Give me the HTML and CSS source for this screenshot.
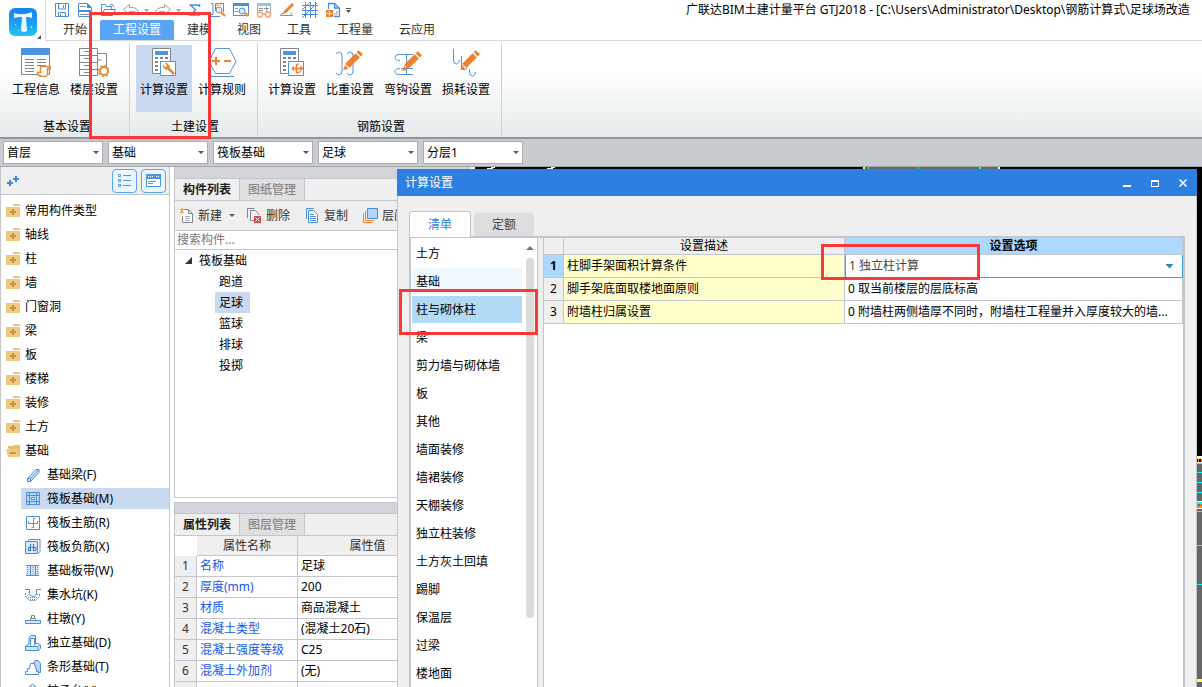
FILE: index.html
```html
<!DOCTYPE html>
<html lang="zh-CN">
<head>
<meta charset="utf-8">
<title>广联达BIM土建计量平台 GTJ2018</title>
<link rel="stylesheet" href="styles.css">
</head>
<body>
<svg class="defs" aria-hidden="true">
  <symbol id="folder" viewBox="0 0 14 13"><path d="M7 1V0h6l1 1v1H7z" fill="#efc981"/><path d="M0 3h14v10H0z" fill="#efc981"/><path d="M4 8h6M7 5v6" stroke="#c79635" stroke-width="2"/></symbol>
  <symbol id="calc" viewBox="0 0 30 30"><path d="M5.500 1.500h18v25h-18z" fill="#fff" stroke="#7f878c"/><path d="M8 4h13v4H8z" fill="#4f93e0"/><path d="M8 10h3v2H8zm5 0h3v2h-3zm5 0h3v2h-3zM8 14h3v2H8zm5 0h3v2h-3zM8 18h3v2H8zM8 22h3v2H8z" fill="#7f878c"/><path d="M13.500 14.500h15v14h-15z" fill="#fff" stroke="#4f93e0"/></symbol>
  <symbol id="pencil" viewBox="0 0 24 24"><path d="m5 16 10-10 4 4L9 20zM16 5l2-2 4 4-2 2zM3 22l2-5 3 4z" fill="#ee7f2d"/></symbol>
</svg>

<header class="head">
  <button class="logo" aria-label="应用菜单">
    <svg width="30" height="30" viewBox="0 0 30 30"><defs><linearGradient id="lg" x2="0" y2="1"><stop stop-color="#1683ee"/><stop offset=".5" stop-color="#1c9cf3"/><stop offset="1" stop-color="#20c4f8"/></linearGradient></defs><rect x="1" y="1" width="28" height="28" rx="6" fill="url(#lg)"/><path d="M6 6q9 3 18-1v6q-3-1-6-1l1 14q-3 2-6 0l1-14q-4 0-8 1z" fill="#e9f6ff"/><path d="M7 17h1v1H7zm16 2h1v2h-1zm-13 4h1v1h-1z" fill="#bfe4ff"/></svg>
    <svg class="corner" width="4" height="4" viewBox="0 0 4 4"><path d="M4 0v4H0z" fill="#555"/></svg>
  </button>
  <div class="head-main">
    <div class="quick">
      <button aria-label="保存"><svg viewBox="0 0 16 16"><path d="M1.500 1.500h13v13h-13zM4.500 2v5h7V2M4.500 14.500v-4h7v4M6.500 12v2" fill="none" stroke="#4a8ddb"/><path d="M9 3h1v3H9z" fill="#4a8ddb"/></svg></button>
      <button aria-label="新建"><svg viewBox="0 0 16 16"><path d="M1.500 1.500h9l4 4v9h-13z" fill="#fff" stroke="#4a8ddb"/><path d="M10 1v5h5zM1 8h14v2H1z" fill="#4a8ddb"/><path d="M3 4.500h6M3 12.500h9" stroke="#8c9397"/></svg></button>
      <button aria-label="打开"><svg viewBox="0 0 16 16"><path d="M1.500 13.500v-11h4l1 2h5v3M1.500 13.500l3-6h11l-3 6zM10 3q3-2 4 2" fill="none" stroke="#4a8ddb"/></svg></button>
      <button aria-label="撤销"><svg viewBox="0 0 16 16"><path d="m.5 7.500 6-5v3q9-1 9 7-3-4-9-3v3z" fill="none" stroke="#9aa0a5"/></svg></button>
      <button class="drop" aria-label="撤销列表"><svg viewBox="0 0 5 3"><path d="M0 0h5L2.500 3z" fill="#9aa0a5"/></svg></button>
      <button aria-label="重做"><svg viewBox="0 0 16 16"><path d="m15.500 7.500-6-5v3q-9-1-9 7 3-4 9-3v3z" fill="none" stroke="#9aa0a5"/></svg></button>
      <button class="drop" aria-label="重做列表"><svg viewBox="0 0 5 3"><path d="M0 0h5L2.500 3z" fill="#9aa0a5"/></svg></button>
      <button aria-label="汇总计算"><svg viewBox="0 0 16 16"><path d="M12.500 5V3h-9l5 5-5 5h9v-2" fill="none" stroke="#4a8ddb" stroke-width="1.500"/></svg></button>
      <button aria-label="查看工程量"><svg viewBox="0 0 16 16"><path d="M1 1.500h2v11H1M5.500 9V1.500h8V10M1 14.500h9" fill="none" stroke="#4a8ddb"/><path d="M6 3h6M6 6h6M7.500 1v7M10.500 1v7" stroke="#ee7f2d" stroke-dasharray="1 1"/><circle cx="9" cy="8" r="3" fill="#dbe9fa" stroke="#8c9397"/><path d="m11 10 4 4" stroke="#ee7f2d" stroke-width="2"/></svg></button>
      <button aria-label="查找"><svg viewBox="0 0 16 16"><path d="M.5 1.500h15v12H.5z" fill="#fff" stroke="#4a8ddb"/><path d="M0 1h16v3H0z" fill="#4a8ddb"/><path d="M2 6.500h3M2 9.500h3" stroke="#8c9397"/><circle cx="9" cy="9" r="3" fill="#dbe9fa" stroke="#4a8ddb"/><path d="m11 12 2-2 3 3-2 2z" fill="#f0a020"/></svg></button>
      <button aria-label="查看属性"><svg viewBox="0 0 16 16"><path d="M1.500 11V1.500h13V11" fill="#fff" stroke="#a3b2c2"/><path d="M1 1h14v3H1z" fill="#9dbde6"/><path d="M3 6.500h4M3 8.500h4M8 6.500h5M10.500 5v5" stroke="#8c9397"/><circle cx="4" cy="12.500" r="2.500" fill="#fff" stroke="#f0a77a" stroke-width="1.500"/><circle cx="12" cy="12.500" r="2.500" fill="#fff" stroke="#f0a77a" stroke-width="1.500"/><path d="M6.500 12h3" stroke="#f0a77a" stroke-width="1.500"/></svg></button>
      <button aria-label="编辑"><svg viewBox="0 0 16 16"><path d="m5 9 8-8 2 2-8 8-3 1z" fill="#ee7f2d"/><path d="M5 11.500H2.500l-1 2h12l-2-3" fill="none" stroke="#8c9397"/></svg></button>
      <button aria-label="轴网"><svg viewBox="0 0 16 16"><path d="M0 3.500h16M0 8.500h16M0 12.500h16M3.500 0v16M8.500 0v16M13.500 0v16M0 16 15 1M0 8l8-8" fill="none" stroke="#4a8ddb"/></svg></button>
      <button aria-label="导入"><svg viewBox="0 0 16 16"><path d="M3.500 7V1.500h6l5 5v8H9M9.500 1v5h5" fill="none" stroke="#4a8ddb" stroke-width="1.300"/><path d="M1 8h7v7H1z" fill="#ee7f2d"/><path d="M2 11.500h5M4.500 9v5" stroke="#fff"/><path d="M12 9v3H9" fill="none" stroke="#8c9397"/></svg></button>
      <button class="drop" aria-label="更多"><svg viewBox="0 0 5 5"><path d="M0 .5h5" stroke="#555"/><path d="M0 2h5L2.500 5z" fill="#555"/></svg></button>
      <div class="app-title">广联达BIM土建计量平台 GTJ2018 - [C:\Users\Administrator\Desktop\钢筋计算式\足球场改造</div>
    </div>
    <nav class="menu">
      <button>开始</button><button class="on">工程设置</button><button>建模</button><button>视图</button><button>工具</button><button>工程量</button><button>云应用</button>
    </nav>
  </div>
</header>

<div class="ribbon">
  <section class="group">
    <div class="tools">
      <button class="tool"><svg viewBox="0 0 30 30"><path d="M.5 1.500h28v26H.5z" fill="#fff" stroke="#7f878c"/><path d="M0 1h29v7H0z" fill="#4f93e0"/><path d="M4 12.500h9M4 15.500h9M4 18.500h9M4 21.500h9M4 24.500h9M16 12.500h9M16 15.500h9M16 18.500h9" stroke="#7f878c"/><path d="M20.500 28.500q-3 1-4-2v-1h3v-6h9v2h-2v6q-1 2-4 2h-4M28 19q2 0 1 3h-2" fill="#fff" stroke="#e98b35" stroke-width="1.500"/></svg>工程信息</button>
      <button class="tool"><svg viewBox="0 0 30 30"><path d="M.5 1.500h18v27H.5zM.5 8.500h18M.5 15.500h18M.5 22.500h18M18.500 6.500h9V20" fill="none" stroke="#7f878c"/><path d="M5 4.500h5M5 11.500h5M5 18.500h5M5 25.500h5M18.500 13h4" stroke="#7f878c"/><circle cx="25" cy="24" r="4" fill="#fff" stroke="#e98b35" stroke-width="2"/><circle cx="25" cy="24" r="5.500" fill="none" stroke="#e98b35" stroke-width="1.500" stroke-dasharray="2 2.300"/></svg>楼层设置</button>
    </div>
    <h2>基本设置</h2>
  </section>
  <section class="group">
    <div class="tools">
      <button class="tool on"><svg viewBox="0 0 30 30"><use href="#calc" width="30" height="30" x="-2"/><path d="m18 20 7 7" stroke="#ee7f2d" stroke-width="2.500"/><path d="M14 17v3l3 3 3-1 1-3-3-3h-2l2 3-2 1z" fill="#e98b35"/></svg>计算设置</button>
      <button class="tool"><svg viewBox="0 0 30 30"><path d="M8.500 1.500h14l6.500 13-6.500 12h-14L2 14.500zM3 29.500h24" fill="none" stroke="#4f93e0"/><path d="M5 14h8M9 10v8M17 14h7" stroke="#ee7f2d" stroke-width="2"/></svg>计算规则</button>
    </div>
    <h2>土建设置</h2>
  </section>
  <section class="group">
    <div class="tools">
      <button class="tool"><svg viewBox="0 0 30 30"><use href="#calc" width="30" height="30" x="-2"/><path d="M15 21.500h10M19.500 26v-7q0-2 2-2M17 19.500q-3 2 0 4M19.500 26q3 0 4-2M23.500 19.500l2 2-2 2" fill="none" stroke="#ee7f2d" stroke-width="1.500"/></svg>计算设置</button>
      <button class="tool"><svg viewBox="0 0 30 30"><path d="M1 7q1-2 3-2 3 0 3 4v15q0 4-3 4-2 0-3-2M12 7q1-2 3-2 3 0 3 4v15q0 4-3 4-2 0-3-2" fill="none" stroke="#4f93e0"/><use href="#pencil" x="5" y="0" width="25" height="25"/></svg>比重设置</button>
      <button class="tool"><svg viewBox="0 0 30 30"><path d="M20 7.500H6q-4 0-4 3 0 3 5 3M13.500 7v20M7 21.500q-5 0-5 3 0 3 5 3h13M8 21.500h12" fill="none" stroke="#4f93e0"/><use href="#pencil" x="6" y="1" width="25" height="25"/></svg>弯钩设置</button>
      <button class="tool"><svg viewBox="0 0 30 30"><path d="M2.500 2v11q0 4 3 4 3-1 3-4M10.500 9v10q0 4 3 4l3-2M18.500 22v3q0 4 3 4 3-1 3-4" fill="none" stroke="#4f93e0"/><use href="#pencil" x="6" y="0" width="25" height="25"/></svg>损耗设置</button>
    </div>
    <h2>钢筋设置</h2>
  </section>
  <div class="mark mark-ribbon"></div>
</div>

<div class="filters">
  <label class="pick"><select aria-label="楼层"><option>首层</option></select></label>
  <label class="pick"><select aria-label="构件大类"><option>基础</option></select></label>
  <label class="pick"><select aria-label="构件类型"><option>筏板基础</option></select></label>
  <label class="pick"><select aria-label="构件"><option>足球</option></select></label>
  <label class="pick"><select aria-label="分层"><option>分层1</option></select></label>
</div>

<main class="work">
  <aside class="nav">
    <div class="nav-bar">
      <svg width="12" height="12" viewBox="0 0 12 12"><path d="M0 8h6M3 5v6M6 4h6M9 1v6" stroke="#3f88dc" stroke-width="2"/></svg>
      <button aria-label="列表视图"><svg width="15" height="15" viewBox="0 0 15 15"><path d="M1.500 1.500h2v2h-2zm0 5h2v2h-2zm0 5h2v2h-2zM6 2.500h8M6 7.500h8M6 12.500h8" fill="none" stroke="#4a98ee"/></svg></button>
      <button aria-label="窗口视图"><svg width="15" height="15" viewBox="0 0 15 15"><path d="M.5 1.500h14v12H.5z" fill="#fff" stroke="#4a98ee"/><path d="M0 1h15v5H0z" fill="#4a98ee"/><path d="M2 3.500h5M10 3.500h3" stroke="#fff" stroke-dasharray="1 1"/><path d="M2 8.500h8M2 10.500h5" stroke="#4a98ee"/></svg></button>
    </div>
    <ul class="kinds">
      <li><svg><use href="#folder"/></svg>常用构件类型</li>
      <li><svg><use href="#folder"/></svg>轴线</li>
      <li><svg><use href="#folder"/></svg>柱</li>
      <li><svg><use href="#folder"/></svg>墙</li>
      <li><svg><use href="#folder"/></svg>门窗洞</li>
      <li><svg><use href="#folder"/></svg>梁</li>
      <li><svg><use href="#folder"/></svg>板</li>
      <li><svg><use href="#folder"/></svg>楼梯</li>
      <li><svg><use href="#folder"/></svg>装修</li>
      <li><svg><use href="#folder"/></svg>土方</li>
      <li><svg viewBox="0 0 14 13"><path d="M2 4V2h5l1-1h5l1 1v10z" fill="#e6bb6c"/><path d="M0 5h12l2 8H2z" fill="#efc981"/><path d="M4 9h6" stroke="#b98829" stroke-width="1.500"/></svg>基础</li>
      <li class="sub"><svg viewBox="0 0 16 16"><path d="M2.500 11.500 11 2.500h3v3l-8.500 9h-3zM2.500 11.500h3v3M5.500 11.500l8-8.500" fill="#d7e6f8" stroke="#4a8ddb"/></svg>基础梁(F)</li>
      <li class="sub on"><svg viewBox="0 0 16 16"><path d="M1.500 1.500h13v12h-13zM4.500 1.500v12M11.500 1.500v12M1.500 4.500h13M1.500 10.500h13" fill="#bcd6f5" stroke="#4a8ddb"/><path d="M6.500 6.500h3v2h-3z" fill="#fff" stroke="#4a8ddb"/></svg>筏板基础(M)</li>
      <li class="sub"><svg viewBox="0 0 16 16"><path d="M1.500 1.500h13v13h-13z" fill="#fff" stroke="#4a8ddb"/><path d="M3.500 6v2.500h9V6M10.500 3.500h-2v9h-2" fill="none" stroke="#7f878c"/></svg>筏板主筋(R)</li>
      <li class="sub"><svg viewBox="0 0 16 16"><path d="M3 2.500l1-2h11v12l-2 2" fill="#fff" stroke="#4a8ddb"/><path d="M.5 2.500h12v12H.5z" fill="#d7e6f8" stroke="#4a8ddb"/><path d="M3.500 11V8.500h3M5.500 5v7M8.500 5v7M7 8.500h4V11M3 11.500h3M8 11.500h3" fill="none" stroke="#2f78cc"/></svg>筏板负筋(X)</li>
      <li class="sub"><svg viewBox="0 0 16 16"><path d="M1 2h13v11H1z" fill="#d7e6f8"/><path d="M1 2.500h13M1 12.500h13M5.500 2v11M10.500 2v11" stroke="#4a8ddb"/><path d="M2.500 4v8M8 4v8M12.500 4v8" stroke="#4a8ddb" stroke-dasharray="1 1"/></svg>基础板带(W)</li>
      <li class="sub"><svg viewBox="0 0 16 16"><path d="M0 2.500h4.500v4q0 3 3.500 3t3.500-3v-4H16" fill="none" stroke="#4a8ddb"/><path d="M.5 6v3l4 4.500h6l4-4V6" fill="none" stroke="#4a8ddb" stroke-dasharray="2 1"/><path d="M3 10.500h10M5 12.500h6M2 8.500h2M12 7.500h2" stroke="#7f878c" stroke-dasharray="1 1"/></svg>集水坑(K)</li>
      <li class="sub"><svg viewBox="0 0 16 16"><path d="M.5 9.500h15v3H.5z" fill="#d7e6f8" stroke="#4a8ddb"/><path d="M5.500 9.500v-2h5v2M6.500 7.500v-3h3v3" fill="none" stroke="#7f878c"/></svg>柱墩(Y)</li>
      <li class="sub"><svg viewBox="0 0 16 16"><path d="M.5 11.500 4 8.500V3l2-2.500h4.500v8h3l2 2v3l-2 2H.5z" fill="#d7e6f8" stroke="#4a8ddb"/><path d="M5.500 10.500v-7h4v7M.5 11.500h12l3-2M13 12v3" fill="#fff" stroke="#4a8ddb"/></svg>独立基础(D)</li>
      <li class="sub"><svg viewBox="0 0 16 16"><path d="M8 4.500l2-3h3l2.500 3v9h-4z" fill="#bcd6f5" stroke="#4a8ddb"/><path d="M.5 15.500v-3h2v-3h2l1-5h4l1 5h1v3h2v3z" fill="#fff" stroke="#4a8ddb"/></svg>条形基础(T)</li>
      <li class="sub"><svg viewBox="0 0 16 16"><path d="m7.500 1 5 4v8h-10V5z" fill="#d7e6f8" stroke="#4a8ddb"/></svg>桩承台(V)</li>
    </ul>
  </aside>

  <div class="mid">
    <section class="pane parts">
      <div class="strip"></div>
      <div class="tabs"><button class="on">构件列表</button><button>图纸管理</button></div>
      <div class="bar">
        <button><svg viewBox="0 0 15 15"><path d="M3.500 4V1.500h6l4 4v9h-10V8M9.500 1.500v4h4" fill="#fff" stroke="#7f878c"/><path d="M6 8.500h5M6 10.500h5M6 12.500h5" stroke="#aab"/><path d="m1 1 4 4M5 1 1 5M3 0v6" stroke="#ee9a2d"/></svg>新建<i class="caret"></i></button>
        <button><svg viewBox="0 0 15 15"><path d="M.5 10V.5h7M3.500 12.500v-10h5l3 3V7M3.500 12.500H7" fill="none" stroke="#7f878c"/><path d="M7 8h7v7H7z" fill="#d5454b"/><path d="m8.500 9.500 4 4m0-4-4 4" stroke="#fff"/></svg>删除</button>
        <button><svg viewBox="0 0 15 15"><path d="M1.500 11V.5h7" fill="none" stroke="#4a8ddb"/><path d="M3.500 2.500h5l4 4v8h-9z" fill="#fff" stroke="#4a8ddb"/><path d="M5 6.500h4M5 8.500h6M5 10.500h6M5 12.500h6" stroke="#4a8ddb"/></svg>复制</button>
        <button><svg viewBox="0 0 15 15"><path d="M.5 5v9.500h9M2.500 3v9.500h9" fill="none" stroke="#ee7f2d"/><path d="M4.500.5h10v10h-10z" fill="#b4d4fb" stroke="#4a8ddb"/></svg>层间复制</button>
      </div>
      <input class="search" type="text" placeholder="搜索构件..." aria-label="搜索构件">
      <ul class="tree">
        <li class="root"><svg width="7" height="7" viewBox="0 0 7 7"><path d="M7 0v7H0z" fill="#333"/></svg>筏板基础</li>
        <li><span>跑道</span></li>
        <li><span class="on">足球</span></li>
        <li><span>篮球</span></li>
        <li><span>排球</span></li>
        <li><span>投掷</span></li>
      </ul>
    </section>
    <section class="pane props">
      <div class="strip"></div>
      <div class="tabs"><button class="on">属性列表</button><button>图层管理</button></div>
      <table class="attrs">
        <colgroup><col class="c-no"><col class="c-name"><col class="c-val"><col></colgroup>
        <thead><tr><td></td><th>属性名称</th><th>属性值</th><th></th></tr></thead>
        <tbody>
          <tr><th>1</th><td>名称</td><td>足球</td><td></td></tr>
          <tr><th>2</th><td>厚度(mm)</td><td>200</td><td></td></tr>
          <tr><th>3</th><td>材质</td><td>商品混凝土</td><td></td></tr>
          <tr><th>4</th><td>混凝土类型</td><td>(混凝土20石)</td><td></td></tr>
          <tr><th>5</th><td>混凝土强度等级</td><td>C25</td><td></td></tr>
          <tr><th>6</th><td>混凝土外加剂</td><td>(无)</td><td></td></tr>
          <tr><th></th><td></td><td></td><td></td></tr>
        </tbody>
      </table>
    </section>
  </div>

  <div class="canvas">
    <svg class="plan-top" width="600" height="2" viewBox="0 0 600 2"><path d="M0 0h4v2H0zM16 1h6v1h-6zM20 0h4v1h-4zM76 1h6v1h-6zM80 0h4v1h-4zM527 0h2v2h-2z" fill="#fff"/><path d="M392 0h135v2H392z" fill="#666"/><path d="M392 0h2v2h-2z" fill="#ff4"/><path d="M397 0h1v2h-1zM447 0h1v2h-1zM508 0h2v2h-2z" fill="#0ff"/></svg>
    <svg class="plan-side" width="5" height="520" viewBox="0 0 5 520"><path d="M0 296h5v224H0z" fill="#666"/><path d="M0 289h5v1H0zM0 295h5v1H0zM0 334h5v1H0zM0 341h5v1H0z" fill="#fff"/><path d="M0 290h5v2H0zM0 512h5v3H0z" fill="#ff4"/><path d="M1 292h1v3H1zM4 292h1v3H4zM0 337h1v4H0zM0 339h5v2H0zM3 337h1v4H3z" fill="#f80"/><path d="M0 296h5v1H0zM0 305h5v1H0zM0 315h5v1H0zM0 325h5v1H0zM0 335h5v2H0zM0 344h5v1H0zM0 378h5v1H0zM0 417h5v1H0z" fill="#0ff"/></svg>
  </div>

  <div class="dialog" role="dialog" aria-labelledby="dlg">
    <div class="dlg-head">
      <h1 id="dlg">计算设置</h1>
      <button aria-label="最小化"><svg viewBox="0 0 8 8"><path d="M0 6h8v2H0z" fill="#fff"/></svg></button>
      <button aria-label="最大化"><svg viewBox="0 0 8 8"><path d="M0 1h8v7H0zm1 2v4h6V3z" fill="#fff" fill-rule="evenodd"/></svg></button>
      <button aria-label="关闭"><svg viewBox="0 0 8 8"><path d="m.5.5 7 7m0-7-7 7" stroke="#fff" stroke-width="1.500"/></svg></button>
    </div>
    <div class="dlg-body">
      <div class="dlg-tabs"><button class="on">清单</button><button>定额</button></div>
      <div class="dlg-main">
        <div class="list-box">
          <ul class="list">
            <li>土方</li><li class="hover">基础</li><li class="on">柱与砌体柱</li><li>梁</li><li>剪力墙与砌体墙</li><li>板</li><li>其他</li><li>墙面装修</li><li>墙裙装修</li><li>天棚装修</li><li>独立柱装修</li><li>土方灰土回填</li><li>踢脚</li><li>保温层</li><li>过梁</li><li>楼地面</li>
          </ul>
          <div class="scroll"><svg width="8" height="4" viewBox="0 0 8 4"><path d="M0 4h8L4 0z" fill="#777"/></svg><span class="thumb"></span></div>
        </div>
        <div class="grid-box">
          <table class="rules">
            <colgroup><col class="r-no"><col class="r-desc"><col></colgroup>
            <thead><tr><td></td><th>设置描述</th><th class="cur">设置选项</th></tr></thead>
            <tbody>
              <tr><th class="cur">1</th><td>柱脚手架面积计算条件</td><td class="edit"><label class="opt"><select aria-label="柱脚手架面积计算条件"><option>1 独立柱计算</option></select></label></td></tr>
              <tr><th>2</th><td>脚手架底面取楼地面原则</td><td>0 取当前楼层的层底标高</td></tr>
              <tr><th>3</th><td>附墙柱归属设置</td><td>0 附墙柱两侧墙厚不同时，附墙柱工程量并入厚度较大的墙...</td></tr>
            </tbody>
          </table>
        </div>
      </div>
    </div>
    <div class="mark mark-item"></div>
    <div class="mark mark-option"></div>
  </div>
</main>
</body>
</html>
```
FILE: styles.css
```css
* { box-sizing: border-box; }
body {
  margin: 0;
  height: 100vh;
  display: flex;
  flex-direction: column;
  overflow: hidden;
  background: #fff;
  color: #000;
  font: 12px/20px "Noto Sans", "Noto Sans CJK SC", sans-serif;
}
button, select, input { font: inherit; color: inherit; }
button { border: 0; padding: 0; background: none; white-space: nowrap; }
ul, h1, h2 { margin: 0; padding: 0; list-style: none; font-size: 12px; font-weight: 400; }
table { border-collapse: separate; border-spacing: 0; table-layout: fixed; width: 100%; }
td, th { padding: 0; font-weight: 400; white-space: nowrap; overflow: hidden; }
svg { flex: none; display: block; }
.defs { position: absolute; width: 0; height: 0; }
.mark { position: absolute; border: 3px solid #fb3838; pointer-events: none; z-index: 5; }

/* title row and menu */
.head { display: flex; flex: none; }
.logo {
  position: relative;
  flex: none;
  width: 46px;
  padding: 6px 0 4px 8px;
  border-right: 1px solid #d8dadb;
}
.corner { position: absolute; right: 4px; bottom: 2px; }
.head-main { flex: 1; min-width: 0; border-bottom: 1px solid #d5d8d8; padding-left: 4px; }
.quick { display: flex; align-items: center; height: 20px; }
.quick button { flex: none; width: 23px; display: flex; justify-content: center; }
.quick button svg { width: 16px; height: 16px; }
.quick .drop { width: 9px; }
.quick .drop svg { width: 5px; height: 5px; }
.app-title { flex: 1; min-width: 0; margin-left: 333px; overflow: hidden; white-space: nowrap; }
.menu { display: flex; height: 20px; }
.menu button { padding: 0 13px; color: #333; line-height: 20px; }
.menu .on { background: #58a5f5; color: #fff; border-radius: 2px 2px 0 0; }

/* ribbon */
.ribbon {
  position: relative;
  flex: none;
  display: flex;
  padding: 0 0 0 2px;
  border-bottom: 2px solid #8f979c;
  background: linear-gradient(#fff 30%, #e6eaea);
}
.group { display: flex; flex-direction: column; margin: 2px 0; padding: 2px 7px 0 6px; border-right: 1px solid #cdd0d1; }
.tools { display: flex; gap: 2px; }
.tool { width: 56px; height: 67px; display: flex; flex-direction: column; align-items: center; padding-top: 2px; line-height: 26px; }
.tool svg { width: 30px; height: 30px; }
.tool.on { background: #c9d9f0; }
.group h2 { text-align: center; padding: 7px 0 0 4px; line-height: 16px; }
.mark-ribbon { left: 89px; top: -29px; width: 122px; height: 127px; }

/* filter row */
.filters { display: flex; gap: 5px; flex: none; padding: 2px 3px; height: 28px; background: #c8cbcf; border-bottom: 1px solid #a3a7ab; }
.pick { display: grid; align-items: center; width: 100px; height: 23px; }
.pick select { grid-area: 1 / 1; appearance: none; width: 100%; height: 23px; padding: 0 3px; border: 1px solid #a9adb0; border-radius: 0; background: #fff; }
.pick::after, .caret { content: ""; width: 6px; height: 3px; background: #555; clip-path: polygon(0 0, 100% 0, 50% 100%); }
.pick::after { grid-area: 1 / 1; justify-self: end; margin-right: 4px; }

/* work area */
.work { position: relative; flex: 1; min-height: 0; display: flex; overflow: hidden; background: #fff; }
.nav { flex: none; width: 170px; border: solid #c3c6cc; border-width: 0 1px; overflow: hidden; }
.nav-bar { display: flex; align-items: center; gap: 4px; height: 28px; padding: 0 3px 0 6px; background: #efefef; border-bottom: 1px solid #c3c6cc; }
.nav-bar > svg { margin-right: auto; }
.nav-bar button { width: 25px; height: 24px; display: grid; place-items: center; border: 1px solid #5aa5f2; border-radius: 4px; background: #edf5fe; }
.kinds { display: flex; flex-direction: column; gap: 3px; padding-top: 5px; }
.kinds li { display: flex; align-items: center; gap: 5px; height: 21px; padding-left: 5px; white-space: nowrap; flex: none; }
.kinds svg { width: 14px; height: 13px; }
.kinds .sub { margin-left: 20px; padding-left: 4px; gap: 6px; }
.kinds .sub svg { width: 16px; height: 16px; }
.kinds .on { background: #c9d9f0; }

.mid { flex: none; width: 297px; margin-left: 4px; display: flex; flex-direction: column; background: #fff; }
.pane { border-left: 1px solid #c3c6cc; }
.parts { border-bottom: 1px solid #c3c6cc; height: 331px; flex: none; margin-bottom: 4px; }
.strip { height: 12px; background: #d3d4d9; border-bottom: 1px solid #c3c6cc; }
.tabs { display: flex; height: 22px; background: #efefef; border-bottom: 1px solid #c3c6cc; }
.tabs button { width: 65px; color: #888; background: #e0e0e0; border-right: 1px solid #c3c6cc; font-weight: 500; }
.tabs .on { color: #222; background: #efefef; font-weight: 700; }
.bar { display: flex; gap: 15px; height: 30px; padding-left: 4px; background: #efefef; border-bottom: 1px solid #c3c6cc; overflow: hidden; }
.bar button { display: flex; align-items: center; gap: 4px; flex: none; color: #333; }
.bar button:first-child { margin-right: -3px; }
.bar svg { width: 15px; height: 15px; }
.caret { margin: 0 0 0 3px; }
.search { display: block; width: 100%; height: 19px; border: 0; border-bottom: 1px solid #c3c6cc; padding: 0 2px; border-radius: 0; }
.search::placeholder { color: #777; }
.tree li { height: 21px; line-height: 21px; padding-left: 40px; }
.tree .root { display: flex; align-items: center; gap: 7px; padding-left: 10px; }
.tree span { display: inline-block; padding: 0 7px 0 4px; }
.tree .on { background: #c9d9f0; }
.props { border-top: 1px solid #c3c6cc; }
.props .strip { height: 11px; }
.c-no { width: 22px; }
.c-name { width: 101px; }
.c-val { width: 140px; }
.attrs th, .attrs td { height: 21px; line-height: 20px; border: solid #c3c6cc; border-width: 0 1px 1px 0; }
.attrs td { padding-left: 3px; }
.attrs thead th, .attrs thead td { height: 20px; line-height: 19px; }
.attrs thead th { background: #efefef; color: #333; }
.attrs thead td { border: 0; }
.attrs tbody th { background: #efefef; color: #333; }
.attrs tbody td:nth-child(2) { color: #1557f0; }

.canvas { position: relative; flex: 1; background: #000; }
.plan-top { position: absolute; left: 0; top: 0; }
.plan-side { position: absolute; right: 0; top: 0; }

/* floating dialog */
.dialog { position: absolute; left: 397px; right: 5px; top: 2px; bottom: 0; display: flex; flex-direction: column; background: #efefef; }
.dlg-head { display: flex; align-items: center; gap: 20px; height: 27px; padding: 0 10px 0 8px; background: #2d80e2; color: #fff; }
.dlg-head h1 { margin-right: auto; }
.dlg-head svg { width: 8px; height: 8px; }
.dlg-body { flex: 1; min-height: 0; display: flex; flex-direction: column; padding: 15px 11px 0; border: solid #c3c6cc; border-width: 0 1px; }
.dlg-tabs { display: flex; align-items: flex-end; gap: 3px; height: 25px; }
.dlg-tabs button { width: 60px; height: 23px; background: #dedede; color: #444; border-radius: 3px 3px 0 0; }
.dlg-tabs .on { width: 62px; height: 26px; margin-bottom: -1px; border: 1px solid #c3c6cc; border-bottom: 0; background: #fff; color: #2d80e2; z-index: 1; }
.dlg-main { flex: 1; min-height: 0; display: flex; gap: 5px; border-top: 2px solid #c3c6cc; }
.list-box { flex: none; width: 129px; display: flex; border: solid #c3c6cc; border-width: 0 1px 0 2px; background: #fff; overflow: hidden; }
.list { flex: 1; padding: 2px 0 0 1px; }
.list li { height: 27px; line-height: 27px; margin-bottom: 1px; padding-left: 4px; }
.list .hover { background: #f0f8ff; }
.list .on { background: #b3daf4; }
.scroll { width: 15px; display: flex; flex-direction: column; align-items: center; gap: 8px; padding-top: 8px; }
.thumb { width: 8px; height: 360px; border-radius: 4px; background: #dcdcdc; }
.grid-box { flex: 1; min-width: 0; background: #fff; border: solid #c3c6cc; border-width: 0 2px 0 1px; }
.r-no { width: 20px; }
.r-desc { width: 281px; }
.rules th, .rules td { height: 23px; line-height: 22px; border: solid #c3c6cc; border-width: 0 1px 1px 0; }
.rules tbody td { padding-left: 3px; text-overflow: ellipsis; }
.rules thead th, .rules thead td { height: 17px; line-height: 16px; background: #efefef; }
.rules tbody th { background: #efefef; }
.rules tbody td:nth-child(2) { background: #ffffcc; }
.rules thead .cur, .rules tbody .cur { background: #add8ff; font-weight: 700; }
.rules tbody .edit { padding: 0; border-color: #38a0d0; }
.opt { display: grid; align-items: center; }
.opt select { grid-area: 1 / 1; appearance: none; width: 100%; height: 22px; border: 0; border-left: 1px solid #38a0d0; border-radius: 0; padding: 0 3px; background: #fff; color: #444; }
.opt::after { content: ""; grid-area: 1 / 1; justify-self: end; margin-right: 8px; width: 9px; height: 5px; background: #3488b5; clip-path: polygon(0 0, 100% 0, 50% 100%); }
.mark-item { left: 2px; top: 120px; width: 139px; height: 46px; }
.mark-option { left: 424px; top: 75px; width: 159px; height: 36px; }
```
